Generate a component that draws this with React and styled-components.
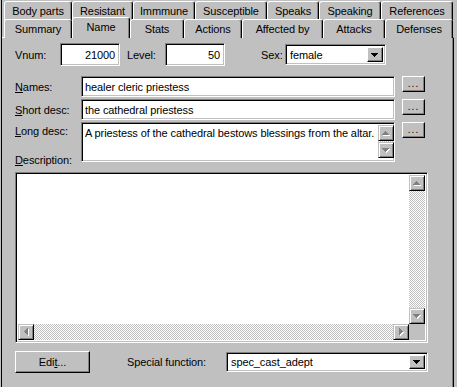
import React from 'react';
import styled, { createGlobalStyle, css } from 'styled-components';

const GlobalStyle = createGlobalStyle`
  html, body {
    margin: 0;
    background: #c0c0c0;
  }
  body {
    font-family: "Liberation Sans", Arial, sans-serif;
    font-size: 11px;
    letter-spacing: -0.1px;
    color: #000;
  }
  * { box-sizing: border-box; }
`;

const sunken = css`
  border: 1px solid;
  border-color: #808080 #fff #fff #808080;
  box-shadow: inset 1px 1px #000, inset -1px -1px #c0c0c0;
  background: #fff;
`;

const raised = css`
  border: 1px solid;
  border-color: #fff #000 #000 #fff;
  box-shadow: inset -1px -1px #808080;
  background: #c0c0c0;
`;

const scrollRaised = css`
  border: 1px solid;
  border-color: #c0c0c0 #000 #000 #c0c0c0;
  box-shadow: inset 1px 1px #fff, inset -1px -1px #808080;
  background: #c0c0c0;
`;

const Window = styled.div`
  width: 457px;
  height: 387px;
  overflow: hidden;
  padding-left: 1px;
`;

const Frame = styled.div`
  width: 453px;
  height: 100%;
  border-left: 1px solid #000;
  display: flex;
  flex-direction: column;
`;

const TabRow = styled.div`
  display: flex;
  align-items: flex-start;
  height: 18px;
  padding-left: 2px;
  margin-top: ${(p) => p.$top || 0}px;
`;

const Tab = styled.div`
  position: relative;
  width: ${(p) => p.$w}px;
  height: ${(p) => (p.$active ? 21 : 19)}px;
  margin-top: ${(p) => (p.$active ? -2 : 0)}px;
  z-index: ${(p) => (p.$active ? 2 : 0)};
  border: 1px solid;
  border-bottom: none;
  border-color: #fff #000 transparent #fff;
  border-radius: 3px 3px 0 0;
  box-shadow: inset -1px 0 #808080;
  background: #c0c0c0;
  display: flex;
  justify-content: center;
  padding-top: 3px;
  line-height: 12px;
  white-space: nowrap;
`;

const Panel = styled.div`
  flex: 1;
  border-top: 1px solid #fff;
  border-right: 1px solid #000;
  box-shadow: inset -1px 0 #808080;
  padding: 5px 0 0 13px;
  display: flex;
  flex-direction: column;
`;

const TopRow = styled.div`
  display: flex;
  align-items: center;
  height: 23px;
`;

const Label = styled.div`
  width: ${(p) => p.$w}px;
  margin-left: ${(p) => p.$ml || 0}px;
  white-space: nowrap;
  line-height: 12px;
`;

const NumField = styled.div`
  ${sunken};
  width: 60px;
  height: 23px;
  display: flex;
  align-items: center;
  justify-content: flex-end;
  padding: 0 4px 0 3px;
`;

const Combo = styled.div`
  ${sunken};
  width: ${(p) => p.$w}px;
  height: ${(p) => p.$h}px;
  display: flex;
  align-items: center;
  justify-content: space-between;
  padding: 2px 2px 2px 4px;
`;

const ComboButton = styled.div`
  ${raised};
  width: 16px;
  height: 100%;
  display: flex;
  align-items: center;
  justify-content: center;
  padding-top: 1px;
`;

const FieldGrid = styled.div`
  display: grid;
  grid-template-columns: 59px 314px 23px;
  grid-template-rows: 21px 21px 40px;
  column-gap: 7px;
  row-gap: 2px;
  margin-top: 10px;
`;

const FieldLabel = styled.div`
  align-self: center;
  white-space: nowrap;
  line-height: 12px;
`;

const LabelStack = styled.div`
  display: flex;
  flex-direction: column;
  justify-content: space-between;
  padding-top: 3px;
  margin-bottom: -4px;
  line-height: 12px;
  white-space: nowrap;
`;

const TextField = styled.div`
  ${sunken};
  display: flex;
  align-items: ${(p) => (p.$multi ? 'flex-start' : 'center')};
  padding: ${(p) => (p.$multi ? '3px 0 2px 3px' : '0 3px')};
  white-space: nowrap;
  overflow: hidden;
  line-height: 12px;
`;

const MultiText = styled.div`
  flex: 1;
  padding-top: 1px;
`;

const DotsButton = styled.div`
  ${raised};
  height: 16px;
  align-self: start;
  display: flex;
  align-items: center;
  justify-content: center;
  font-size: 10px;
  letter-spacing: 1px;
  padding-bottom: 2px;
`;

const VScroll = styled.div`
  width: 16px;
  height: 100%;
  display: flex;
  flex-direction: column;
  margin-top: ${(p) => p.$mt || 0}px;
`;

const ScrollBtn = styled.div`
  ${scrollRaised};
  width: 16px;
  height: 16px;
  flex-shrink: 0;
  display: flex;
  align-items: center;
  justify-content: center;
`;

const Track = styled.div`
  flex: 1;
  background-color: #c0c0c0;
  background-image: conic-gradient(#fff 0 25%, #c0c0c0 0 50%, #fff 0 75%, #c0c0c0 0);
  background-size: 2px 2px;
`;

const BigBox = styled.div`
  ${sunken};
  margin-top: 10px;
  width: 413px;
  height: 171px;
  padding: 2px;
  display: grid;
  grid-template-columns: 1fr 16px;
  grid-template-rows: 1fr 16px;
`;

const HScroll = styled.div`
  display: flex;
  height: 16px;
`;

const Corner = styled.div`
  background: #c0c0c0;
`;

const BottomRow = styled.div`
  display: flex;
  align-items: center;
  margin-top: 8px;
  height: 22px;
`;

const PushButton = styled.div`
  ${raised};
  width: 75px;
  height: 22px;
  display: flex;
  align-items: center;
  justify-content: center;
`;

const arrowPaths = {
  up: { d: 'M3 0h1v1h1v1h1v1h1v1H0V3h1V2h1V1h1z', w: 7, h: 4 },
  down: { d: 'M0 0h7v1H6v1H5v1H4v1H3V3H2V2H1V1H0z', w: 7, h: 4 },
  left: { d: 'M3 0h1v7H3V6H2V5H1V4H0V3h1V2h1V1h1z', w: 4, h: 7 },
  right: { d: 'M0 0h1v1h1v1h1v1h1v1H3v1H2v1H1v1H0z', w: 4, h: 7 },
};

function Arrow({ dir, disabled }) {
  const a = arrowPaths[dir];
  return (
    <svg width={a.w + 1} height={a.h + 1} viewBox={`0 0 ${a.w + 1} ${a.h + 1}`} shapeRendering="crispEdges">
      {disabled && <path d={a.d} fill="#fff" transform="translate(1 1)" />}
      <path d={a.d} fill={disabled ? '#808080' : '#000'} />
    </svg>
  );
}

const backTabs = [
  ['Body parts', 68],
  ['Resistant', 61],
  ['Immmune', 62],
  ['Susceptible', 72],
  ['Speaks', 52],
  ['Speaking', 62],
  ['References', 72],
];

const frontTabs = [
  ['Summary', 68],
  ['Name', 58],
  ['Stats', 54],
  ['Actions', 58],
  ['Affected by', 81],
  ['Attacks', 62],
  ['Defenses', 68],
];

function DropDown({ value, w, h }) {
  return (
    <Combo $w={w} $h={h}>
      <span>{value}</span>
      <ComboButton>
        <Arrow dir="down" />
      </ComboButton>
    </Combo>
  );
}

function VerticalBar({ mt }) {
  return (
    <VScroll $mt={mt}>
      <ScrollBtn><Arrow dir="up" disabled /></ScrollBtn>
      <Track />
      <ScrollBtn><Arrow dir="down" disabled /></ScrollBtn>
    </VScroll>
  );
}

export default function App() {
  return (
    <Window>
      <GlobalStyle />
      <Frame>
        <TabRow $top={1}>
          {backTabs.map(([name, w]) => (
            <Tab key={name} $w={w}>{name}</Tab>
          ))}
        </TabRow>
        <TabRow>
          {frontTabs.map(([name, w]) => (
            <Tab key={name} $w={w} $active={name === 'Name'}>{name}</Tab>
          ))}
        </TabRow>
        <Panel>
          <TopRow>
            <Label $w={45}>Vnum:</Label>
            <NumField>21000</NumField>
            <Label $w={38} $ml={7}>Level:</Label>
            <NumField>50</NumField>
            <Label $w={24} $ml={36}>Sex:</Label>
            <DropDown value="female" w={101} h={21} />
          </TopRow>

          <FieldGrid>
            <FieldLabel><u>N</u>ames:</FieldLabel>
            <TextField>healer cleric priestess</TextField>
            <DotsButton>...</DotsButton>

            <FieldLabel><u>S</u>hort desc:</FieldLabel>
            <TextField>the cathedral priestess</TextField>
            <DotsButton>...</DotsButton>

            <LabelStack>
              <span><u>L</u>ong desc:</span>
              <span><u>D</u>escription:</span>
            </LabelStack>
            <TextField $multi>
              <MultiText>A priestess of the cathedral bestows blessings from the altar.</MultiText>
              <VerticalBar mt={-1} />
            </TextField>
            <DotsButton>...</DotsButton>
          </FieldGrid>

          <BigBox>
            <div />
            <VerticalBar />
            <HScroll>
              <ScrollBtn><Arrow dir="left" disabled /></ScrollBtn>
              <Track />
              <ScrollBtn><Arrow dir="right" disabled /></ScrollBtn>
            </HScroll>
            <Corner />
          </BigBox>

          <BottomRow>
            <PushButton>Edi<u>t</u>...</PushButton>
            <Label $w={99} $ml={37}>Special function:</Label>
            <DropDown value="spec_cast_adept" w={202} h={20} />
          </BottomRow>
        </Panel>
      </Frame>
    </Window>
  );
}
